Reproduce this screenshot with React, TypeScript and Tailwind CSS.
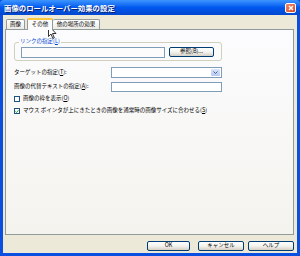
const jp = "font-['Noto_Sans_CJK_JP','Noto_Sans',sans-serif]";

function XpButton({ label, w }: { label: string; w: string }) {
  return (
    <div
      className={`${w} h-[10px] rounded-[2px] border border-[#003c74] bg-gradient-to-b from-[#ffffff] via-[#f3f3ef] to-[#d6d0c5] flex items-center justify-center text-[5.5px] leading-none text-black`}
    >
      {label}
    </div>
  );
}

export default function App() {
  return (
    <div className={`relative w-[300px] h-[256px] flex flex-col bg-[#0a4fe0] ${jp}`}>
      {/* title bar */}
      <div className="h-[15px] flex items-center justify-between pl-[4px] pr-[4px] bg-gradient-to-b from-[#3d95ff] via-[#0058ee] to-[#0047cf] rounded-t-[4px]">
        <span className="text-[7.4px] font-bold text-white leading-none [text-shadow:1px_1px_0_#0a1e6e]">
          画像のロールオーバー効果の設定
        </span>
        <div className="w-[11px] h-[10px] rounded-[2px] border border-white bg-gradient-to-br from-[#f08a6c] to-[#d4401c] flex items-center justify-center">
          <svg width="6" height="6" viewBox="0 0 6 6">
            <path d="M1 1L5 5M5 1L1 5" stroke="white" strokeWidth="1.4" />
          </svg>
        </div>
      </div>

      {/* body */}
      <div className="flex-1 mx-[3px] mb-[3px] bg-[#ece9d8] flex flex-col pl-[2px] pr-[3px]">
        {/* tabs */}
        <div className="h-[14px] flex items-end pl-[1px]">
          <div className="h-[10px] w-[19px] mb-[0px] border border-b-0 border-[#919b9c] rounded-t-[2px] bg-gradient-to-b from-white to-[#ecebe6] flex items-center justify-center text-[5.5px] leading-none text-black">
            画像
          </div>
          <div className="relative z-10 h-[12px] w-[26px] ml-[2px] -mb-[1px] border border-b-0 border-[#919b9c] border-t-[2px] border-t-[#ffc83c] rounded-t-[2px] bg-[#fcfcfe] flex items-center justify-center text-[5.5px] leading-none text-black">
            その他
          </div>
          <div className="h-[10px] w-[47px] border border-b-0 border-l-0 border-[#919b9c] rounded-t-[2px] bg-gradient-to-b from-white to-[#ecebe6] flex items-center justify-center text-[5.5px] leading-none text-black">
            他の場所の効果
          </div>
        </div>

        {/* panel */}
        <div className="h-[206px] border border-[#919b9c] bg-gradient-to-b from-[#fcfcfe] to-[#f4f3ee] flex flex-col pl-[8px] text-[5.5px] leading-none text-black">
          {/* group box */}
          <div className="relative mt-[12px] w-[208px] h-[19px] border border-[#d0d0bf] rounded-[3px] flex items-center pl-[6px] pt-[1px]">
            <span className="absolute -top-[4px] left-[4px] px-[1px] bg-[#fbfbfc] text-[#0046d5]">
              リンクの指定(<span className="underline">L</span>)
            </span>
            <div className="w-[144px] h-[11px] border border-[#7f9db9] bg-[#fcfcfd]" />
            <div className="ml-[4px]">
              <XpButton label="参照(B)..." w="w-[45px]" />
            </div>
          </div>

          {/* target */}
          <div className="mt-[6px] h-[11px] flex items-center">
            <span className="w-[97px]">ターゲットの指定(<span className="underline">T</span>):</span>
            <div className="w-[111px] h-[11px] border border-[#7f9db9] bg-white flex justify-end p-[1px]">
              <div className="w-[9px] h-full rounded-[1px] bg-gradient-to-b from-[#dce6fb] to-[#b6c9f5] flex items-center justify-center">
                <svg width="5" height="3" viewBox="0 0 5 3">
                  <path d="M0.5 0.5L2.5 2.5L4.5 0.5" stroke="#4d6185" strokeWidth="1" fill="none" />
                </svg>
              </div>
            </div>
          </div>

          {/* alt text */}
          <div className="mt-[4px] h-[10px] flex items-center">
            <span className="w-[97px]">画像の代替テキストの指定(<span className="underline">A</span>):</span>
            <div className="w-[111px] h-[10px] border border-[#7f9db9] bg-white" />
          </div>

          {/* checkboxes */}
          <div className="mt-[4px] flex items-center">
            <div className="w-[6px] h-[6px] border border-[#1c5180] bg-white" />
            <span className="ml-[3px]">画像の枠を表示(<span className="underline">O</span>)</span>
          </div>
          <div className="mt-[6px] flex items-center">
            <div className="w-[6px] h-[6px] border border-[#1c5180] bg-white flex items-center justify-center">
              <svg width="5" height="5" viewBox="0 0 5 5">
                <path d="M0.6 2.4L1.9 3.8L4.4 0.9" stroke="#21a121" strokeWidth="1.2" fill="none" />
              </svg>
            </div>
            <span className="ml-[3px]">
              マウス ポインタが上にきたときの画像を通常時の画像サイズに合わせる(<span className="underline">S</span>)
            </span>
          </div>
        </div>

        {/* buttons */}
        <div className="flex justify-end pt-[6px]">
          <XpButton label="OK" w="w-[43px]" />
          <div className="ml-[8px]">
            <XpButton label="キャンセル" w="w-[46px]" />
          </div>
          <div className="ml-[4px]">
            <XpButton label="ヘルプ" w="w-[46px]" />
          </div>
        </div>
      </div>

      {/* mouse cursor over the tab */}
      <svg className="absolute left-[48px] top-[25px]" width="9" height="15" viewBox="0 0 9 15">
        <path d="M0.5 0.5L0.5 11.5L3 9L4.8 13.5L6.3 12.8L4.5 8.5L8 8.5Z" fill="white" stroke="black" strokeWidth="0.8" />
      </svg>
    </div>
  );
}
